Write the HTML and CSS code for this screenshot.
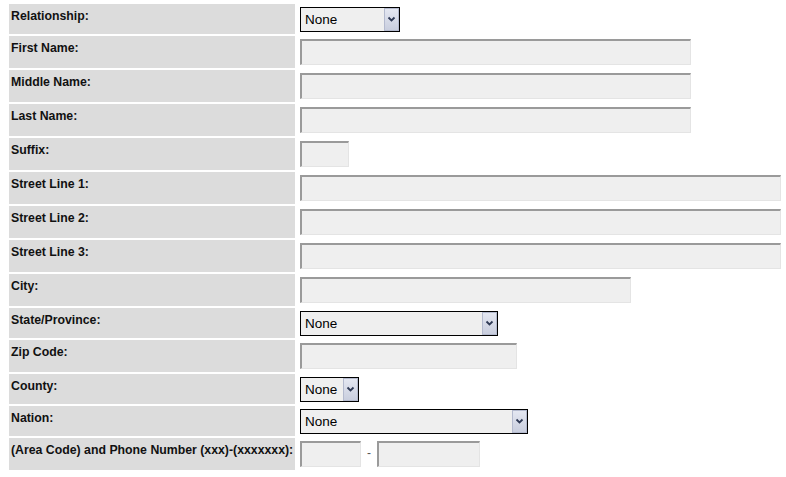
FILE: index.html
```html
<!DOCTYPE html>
<html>
<head>
<meta charset="utf-8">
<link rel="stylesheet" href="styles.css">
</head>
<body>
<form class="form">
  <div class="lab">Relationship:</div>
  <div class="fld s"><span class="sel w100"><select><option>None</option></select><span class="btn"><svg width="9" height="7" viewBox="0 0 9 7"><polyline points="1.5,1.5 4.5,4.5 7.5,1.5" fill="none" stroke="#2f3a55" stroke-width="1.8"/></svg></span></span></div>

  <div class="lab">First Name:</div>
  <div class="fld"><input class="inp w391" type="text"></div>

  <div class="lab">Middle Name:</div>
  <div class="fld"><input class="inp w391" type="text"></div>

  <div class="lab">Last Name:</div>
  <div class="fld"><input class="inp w391" type="text"></div>

  <div class="lab">Suffix:</div>
  <div class="fld"><input class="inp w49" type="text"></div>

  <div class="lab">Street Line 1:</div>
  <div class="fld"><input class="inp w481" type="text"></div>

  <div class="lab">Street Line 2:</div>
  <div class="fld"><input class="inp w481" type="text"></div>

  <div class="lab">Street Line 3:</div>
  <div class="fld"><input class="inp w481" type="text"></div>

  <div class="lab">City:</div>
  <div class="fld"><input class="inp w331" type="text"></div>

  <div class="lab">State/Province:</div>
  <div class="fld s"><span class="sel w198"><select><option>None</option></select><span class="btn"><svg width="9" height="7" viewBox="0 0 9 7"><polyline points="1.5,1.5 4.5,4.5 7.5,1.5" fill="none" stroke="#2f3a55" stroke-width="1.8"/></svg></span></span></div>

  <div class="lab">Zip Code:</div>
  <div class="fld"><input class="inp w217" type="text"></div>

  <div class="lab">County:</div>
  <div class="fld s"><span class="sel w59"><select><option>None</option></select><span class="btn"><svg width="9" height="7" viewBox="0 0 9 7"><polyline points="1.5,1.5 4.5,4.5 7.5,1.5" fill="none" stroke="#2f3a55" stroke-width="1.8"/></svg></span></span></div>

  <div class="lab">Nation:</div>
  <div class="fld s"><span class="sel w228"><select><option>None</option></select><span class="btn"><svg width="9" height="7" viewBox="0 0 9 7"><polyline points="1.5,1.5 4.5,4.5 7.5,1.5" fill="none" stroke="#2f3a55" stroke-width="1.8"/></svg></span></span></div>

  <div class="lab">(Area Code) and Phone Number (xxx)-(xxxxxxx):</div>
  <div class="fld phone"><input class="inp w61" type="text"><span class="dash">-</span><input class="inp w103" type="text"></div>
</form>
</body>
</html>
```

FILE: styles.css
```css
html, body {
  margin: 0;
  padding: 0;
  background: #ffffff;
}

.form {
  display: grid;
  grid-template-columns: 286px 1fr;
  column-gap: 2px;
  row-gap: 2px;
  padding: 4px 0 0 9px;
  width: 775px;
  font-family: "Liberation Sans", Arial, sans-serif;
}

.lab {
  background: #dcdcdc;
  padding: 5px 1px 0 2px;
  font-size: 12.3px;
  line-height: 14px;
  font-weight: bold;
  color: #111;
  white-space: nowrap;
}

.fld {
  box-sizing: border-box;
  height: 32px;
  padding: 3px 0 0 3px;
}

.fld.s {
  height: 30px;
}

.inp {
  box-sizing: border-box;
  display: block;
  height: 26px;
  margin: 0;
  padding: 0;
  background: #efefef;
  border-top: 2px solid #9a9a9a;
  border-left: 2px solid #9a9a9a;
  border-right: 1px solid #e4e4e4;
  border-bottom: 1px solid #e4e4e4;
  outline: none;
}

.w391 { width: 391px; }
.w481 { width: 481px; }
.w331 { width: 331px; }
.w217 { width: 217px; }
.w49 { width: 49px; }
.w61 { width: 61px; }
.w103 { width: 103px; }

.sel {
  box-sizing: border-box;
  display: flex;
  height: 25px;
  border: 1px solid #000;
  background: #efefef;
}

.w100 { width: 100px; }
.w198 { width: 198px; }
.w59 { width: 59px; }
.w228 { width: 228px; }

.sel select {
  appearance: none;
  -webkit-appearance: none;
  flex: 1;
  min-width: 0;
  border: none;
  background: transparent;
  margin: 0;
  padding: 0 0 0 4px;
  font-family: "Liberation Sans", Arial, sans-serif;
  font-size: 13.5px;
  color: #000;
  outline: none;
}

.btn {
  box-sizing: border-box;
  flex: 0 0 15px;
  width: 15px;
  display: flex;
  align-items: center;
  justify-content: center;
  border: 1px solid #b4bace;
  background: linear-gradient(#e4e7f1, #c9cede);
}

.phone {
  display: flex;
  align-items: flex-start;
}

.dash {
  width: 16px;
  text-align: center;
  font-size: 12px;
  line-height: 24px;
  color: #555;
}
```
